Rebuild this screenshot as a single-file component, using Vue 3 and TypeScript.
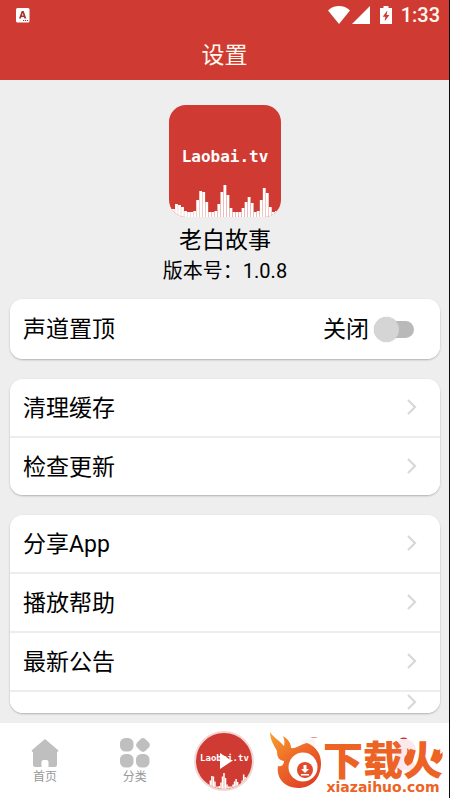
<script setup lang="ts">
import { ref } from 'vue'

const pinned = ref(false)
const groups: string[][] = [
  ['清理缓存', '检查更新'],
  ['分享App', '播放帮助', '最新公告', ''],
]
// Heights of the equaliser bars along the foot of the logo
const bars: number[] = [
  6, 8, 13, 12, 10, 6, 5, 5, 6, 17, 26, 25, 15, 5, 5, 6, 13, 25, 32, 22, 9, 5, 5, 5, 9, 15, 20, 14,
  5, 6, 17, 29, 24, 10, 5, 6, 8,
]
</script>

<template>
  <div class="app">
    <header class="header">
      <div class="status">
        <svg class="badge" viewBox="0 0 14 15" aria-hidden="true">
          <rect width="13.5" height="14.5" rx="1.5" fill="#fff" />
          <path d="M3 10.5 5.7 3h2L10.3 10.5H8.4L7.9 9H5.4L5 10.5ZM5.9 7.5h1.6L6.7 5Z" fill="#a8322c" />
          <path d="M7 12.5h1.2M9 12.5h1.2M11 12.5h1.2" stroke="#a33" />
        </svg>
        <div class="indicators">
          <svg class="wifi" viewBox="0 0 22 18" aria-hidden="true">
            <path d="M0 4.5C6-1.4 16-1.4 22 4.5L11 18Z" fill="#fff" />
          </svg>
          <svg class="signal" viewBox="0 0 18 18" aria-hidden="true"><path d="M18 0v18H0Z" fill="#fff" /></svg>
          <svg class="battery" viewBox="0 0 12 18" aria-hidden="true">
            <path d="M3.5 0h5v2H12v16H0V2h3.500Z" fill="#fff" />
            <path d="M7.300 4.500 2.700 10.700h2.700l-.7 4.600 4.700-6.400H6.600Z" fill="#cf3b32" />
          </svg>
          <span class="time">1:33</span>
        </div>
      </div>
      <h1 class="title">设置</h1>
    </header>

    <main class="content">
      <section class="about">
        <div class="logo">
          <span class="logo-name">Laobai.tv</span>
          <svg class="bars" viewBox="0 0 111 34" preserveAspectRatio="none" aria-hidden="true">
            <rect v-for="(h, i) in bars" :key="i" :x="i * 3" :y="34 - h" width="2.8" :height="h" fill="#fff" />
          </svg>
        </div>
        <h2 class="name">老白故事</h2>
        <p class="version">版本号：1.0.8</p>
      </section>

      <section class="card">
        <label class="row row-switch">
          <span class="label">声道置顶</span>
          <span class="control">
            <span class="label">{{ pinned ? '开启' : '关闭' }}</span>
            <input v-model="pinned" class="switch" type="checkbox" />
          </span>
        </label>
      </section>

      <section v-for="(group, g) in groups" :key="g" class="card">
        <button v-for="item in group" :key="item" type="button" class="row" :class="{ partial: !item }">
          <span class="label">{{ item }}</span>
          <svg class="chevron" viewBox="0 0 10 16" aria-hidden="true">
            <path d="M1 1 8 8 1 15" fill="none" stroke="#d8d8d8" stroke-width="2.2" />
          </svg>
        </button>
      </section>
    </main>

    <nav class="nav">
      <a class="tab" href="#home">
        <svg class="tab-icon" viewBox="0 0 30 30" aria-hidden="true">
          <path d="M15 1 28.500 12.500 27.500 14H27v13q0 2-2 2h-6.500v-5q0-2-2-2h-3q-2 0-2 2v5H5q-2 0-2-2V14h-.5L1.500 12.500Z" fill="#bfbfbf" />
        </svg>
        <span>首页</span>
      </a>
      <a class="tab" href="#category">
        <svg class="tab-icon" viewBox="0 0 30 30" aria-hidden="true">
          <g fill="#bfbfbf">
            <rect x="0" y="0" width="13.500" height="13.500" rx="5.500" />
            <path d="M20.500 1.200q2.500-2.400 5 0l3.300 3.300q2.200 2.500 0 5l-3.300 3.300q-2.500 2.200-5 0l-3.300-3.300q-2.200-2.500 0-5Z" />
            <rect x="0" y="16" width="13.500" height="13.500" rx="5.500" />
            <rect x="16" y="16" width="13.500" height="13.500" rx="5.500" />
          </g>
        </svg>
        <span>分类</span>
      </a>
      <button class="tab tab-player" type="button" aria-label="播放">
        <span class="player">
          <span class="player-name">Laobai.tv</span>
          <svg class="player-bars" viewBox="0 0 111 34" preserveAspectRatio="none" aria-hidden="true">
            <rect v-for="(h, i) in bars" :key="i" :x="i * 3" :y="34 - h" width="3" :height="h" fill="#fff" />
          </svg>
          <svg class="play" viewBox="0 0 12 16" aria-hidden="true"><path d="M0 0 12 8 0 16Z" fill="#fff" /></svg>
        </span>
      </button>
      <div class="brand">
        <svg class="faded" viewBox="0 0 180 75" aria-hidden="true">
          <path d="M41 15q4-2 8 0Z" fill="#d98a90" />
          <path d="M32 18q7-3 14-1v12H33Z" fill="#fbf3f4" />
          <circle cx="136" cy="27" r="11" fill="#fce9ec" />
          <path d="M125 47q0-11 11-11t11 11Z" fill="#fce9ec" />
          <path d="M131 16q4-3 8 0Z" fill="#c9353c" />
          <path d="M138 25q6 4 4 10l3-2q0 8-6 10-5-3-3-9 4-4 2-9Z" fill="#ec6325" />
          <path d="M172 26q-2 3 0 5l2-2q1 8-6 12-5-3-3-9 2-4 7-6Z" fill="#ec6325" />
        </svg>
        <svg class="flame" viewBox="0 0 54 60" aria-hidden="true">
          <defs>
            <linearGradient id="fire" x1="0" y1="0" x2=".7" y2="1">
              <stop offset="0" stop-color="#f7a32f" />
              <stop offset=".5" stop-color="#ee6a28" />
              <stop offset="1" stop-color="#df4126" />
            </linearGradient>
          </defs>
          <path d="M1 1C4 6 10 9 15 15C16 11 15 8 14 5C19 8 22 12 22 17C27 18 32 13 38 12C46 15 52 22 52 32C52 47 43 57 29 57C15 57 7 47 9 35C12 36 15 34 15 30C9 29 8 25 8 20C5 14 1 9 1 1Z" fill="url(#fire)" />
          <circle cx="34" cy="36" r="14.500" fill="#fff" />
          <circle cx="36" cy="39" r="8" fill="#e04b2d" />
          <path d="M34.500 34h3v4h2.500l-4 4-4-4h2.500ZM32 43h8v1.500h-8Z" fill="#fff" />
        </svg>
        <div class="brand-text">
          <span class="brand-name">下载火</span>
          <span class="brand-site">xiazaihuo.com</span>
        </div>
      </div>
    </nav>
  </div>
</template>

<style>
body {
  margin: 0;
  background: #eeeeee;
}
</style>

<style scoped>
.app {
  box-sizing: border-box;
  min-height: 100vh;
  display: flex;
  flex-direction: column;
  border-right: 1px solid #080d14;
  background: #eeeeee;
  color: #000;
  font-family: Roboto, 'Noto Sans CJK SC', sans-serif;
}
h1,
h2,
p {
  margin: 0;
  font-weight: 400;
}
.header {
  height: 80px;
  background: #cf3b32;
  color: #fff8ee;
}
.status {
  height: 30px;
  padding: 0 9px 0 16px;
  display: flex;
  justify-content: space-between;
  align-items: center;
}
.badge {
  width: 14px;
  height: 15px;
}
.indicators {
  display: flex;
  align-items: center;
}
.wifi {
  width: 22px;
  height: 18px;
  margin-right: 2px;
}
.signal {
  width: 18px;
  height: 18px;
  margin-right: 10px;
}
.battery {
  width: 12px;
  height: 18px;
  margin-right: 9px;
}
.time {
  font-size: 20px;
  line-height: 30px;
  font-weight: 500;
}
.title {
  font-size: 23px;
  line-height: 52px;
  text-align: center;
}
.content {
  flex: 1;
  display: flex;
  flex-direction: column;
  gap: 20px;
  padding: 25px 9px 10px 10px;
}
.about {
  display: flex;
  flex-direction: column;
  align-items: center;
  margin-bottom: -7px;
}
.logo {
  width: 112px;
  height: 112px;
  display: flex;
  flex-direction: column;
  justify-content: space-between;
  border-radius: 17px;
  overflow: hidden;
  background: #cf3b32;
  color: #fff;
  text-align: center;
}
.logo-name {
  padding-top: 40px;
  font: 700 16px/24px 'DejaVu Sans Mono', monospace;
}
.bars {
  width: 112px;
  height: 34px;
}
.name {
  font-size: 23px;
  line-height: 32px;
  padding-top: 8px;
}
.version {
  font-size: 20px;
  line-height: 29px;
}
.card {
  overflow: hidden;
  border-radius: 13px;
  background: #fff;
  box-shadow: 0 1px 2px #b0b0b0;
}
.row {
  box-sizing: border-box;
  width: 100%;
  height: 57px;
  padding: 0 23px 0 13px;
  display: flex;
  align-items: center;
  justify-content: space-between;
  border: 0;
  background: #fff;
  color: inherit;
  font: inherit;
  font-size: 23px;
  line-height: 34px;
  text-align: left;
}
.row + .row {
  height: 59px;
  border-top: 2px solid #ededed;
}
.row-switch {
  height: 60px;
  padding-right: 26px;
}
.row + .partial {
  height: 23px;
}
.label {
  padding-top: 2px;
}
.chevron {
  width: 10px;
  height: 16px;
  margin-bottom: 2px;
}
.control {
  display: flex;
  align-items: center;
  gap: 5px;
}
.switch {
  appearance: none;
  box-sizing: border-box;
  width: 40px;
  height: 17px;
  margin: 0;
  display: flex;
  align-items: center;
  background: #b9b9b9;
  border-radius: 9px;
}
.switch::before {
  content: '';
  width: 25px;
  height: 25px;
  flex: none;
  border-radius: 50%;
  background: #d5d5d5;
  box-shadow: 0 0 1px #bbb;
}
.switch:checked {
  justify-content: flex-end;
}
.nav {
  height: 75px;
  display: grid;
  grid-template-columns: 1fr 1fr 1fr minmax(0, 2fr);
  background: #fff;
}
.tab {
  padding: 2px 0 0;
  display: flex;
  flex-direction: column;
  align-items: center;
  justify-content: center;
  border: 0;
  background: none;
  color: #999;
  font-size: 12px;
  line-height: 18px;
  text-decoration: none;
}
.tab-player {
  padding: 0;
}
.tab-icon {
  width: 30px;
  height: 30px;
}
.player {
  position: relative;
  box-sizing: border-box;
  width: 60px;
  height: 60px;
  display: flex;
  flex-direction: column;
  align-items: center;
  justify-content: space-between;
  overflow: hidden;
  border: 2px solid #f0d8d5;
  border-radius: 50%;
  background: #cf3b32;
  color: #fff;
}
.player-name {
  padding-top: 18px;
  font: 700 9px/14px 'DejaVu Sans Mono', monospace;
}
.player-bars {
  width: 56px;
  height: 17px;
}
.play {
  position: absolute;
  left: 24px;
  top: 20px;
  width: 12px;
  height: 16px;
}
.brand {
  position: relative;
  display: flex;
  align-items: center;
  justify-content: flex-end;
  padding-right: 6px;
  color: #ec6325;
  white-space: nowrap;
}
.faded {
  position: absolute;
  inset: 0;
  width: 100%;
  height: 100%;
}
.flame {
  position: relative;
  flex: none;
  width: 54px;
  height: 60px;
}
.brand-text {
  position: relative;
  display: flex;
  flex-direction: column;
  align-items: center;
  padding-top: 14px;
}
.brand-name {
  font: 900 40px/38px 'Noto Sans CJK SC', sans-serif;
}
.brand-site {
  font: 700 14px/20px 'DejaVu Sans', sans-serif;
}
</style>
